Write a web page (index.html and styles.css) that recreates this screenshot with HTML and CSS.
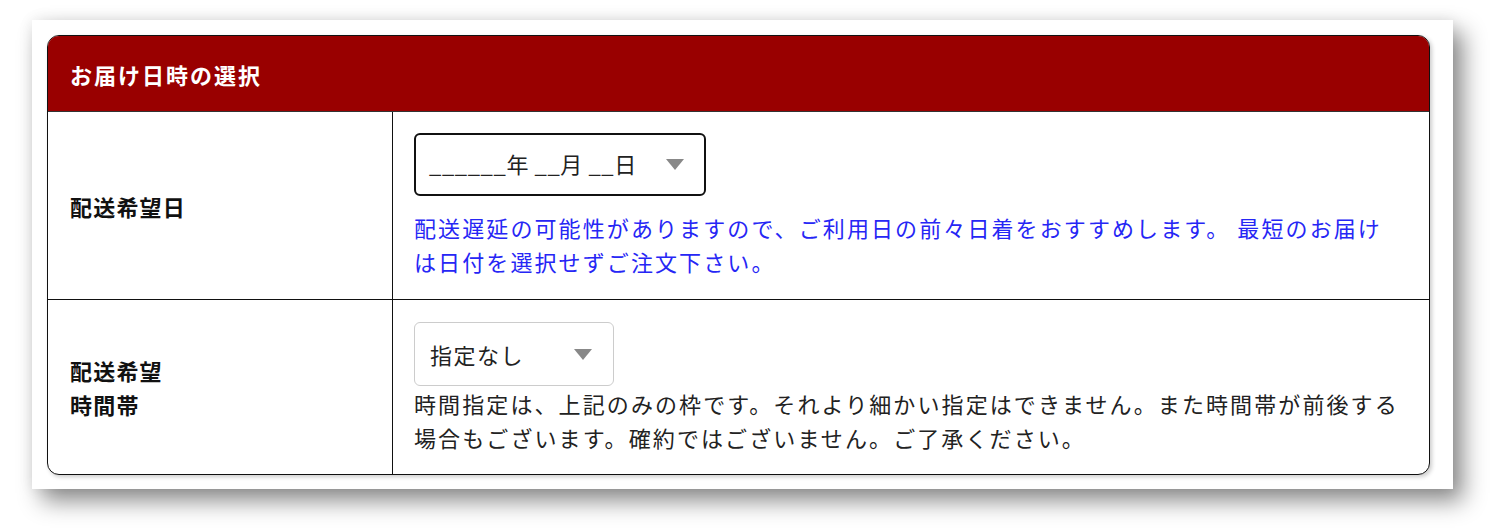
FILE: index.html
```html
<!DOCTYPE html>
<html lang="ja">
<head>
<meta charset="utf-8">
<link rel="stylesheet" href="styles.css">
</head>
<body>
<div class="frame">
  <div class="card">
    <div class="card-head">お届け日時の選択</div>
    <div class="row">
      <div class="label">配送希望日</div>
      <div class="field">
        <div class="select select-date">
          <span class="select-text">______年 __月 __日</span>
          <span class="caret"></span>
        </div>
        <p class="note note-blue">配送遅延の可能性がありますので、ご利用日の前々日着をおすすめします。 最短のお届けは日付を選択せずご注文下さい。</p>
      </div>
    </div>
    <div class="row row-last">
      <div class="label">配送希望<br>時間帯</div>
      <div class="field">
        <div class="select select-time">
          <span class="select-text">指定なし</span>
          <span class="caret"></span>
        </div>
        <p class="note">時間指定は、上記のみの枠です。それより細かい指定はできません。また時間帯が前後する場合もございます。確約ではございません。ご了承ください。</p>
      </div>
    </div>
  </div>
</div>
</body>
</html>
```

FILE: styles.css
```css
* { box-sizing: border-box; }
html, body { margin: 0; padding: 0; background: #fff; }
body {
  font-family: "Noto Sans CJK JP", "Noto Sans", sans-serif;
  color: #222;
  padding: 20px 47px 0 32px;
  min-height: 532px;
}
.frame {
  width: 1421px;
  height: 469px;
  background: #fff;
  box-shadow: 10px 12px 22px rgba(0,0,0,0.45), 0 0 14px rgba(0,0,0,0.08);
  padding: 15px 23px 14px 15px;
}
.card {
  border: 1px solid #111;
  border-radius: 12px;
  overflow: hidden;
  height: 440px;
  box-shadow: 2px 2px 4px rgba(0,0,0,0.2);
  background: #fff;
}
.card-head {
  background: #990000;
  color: #fff;
  font-weight: bold;
  font-size: 22px;
  letter-spacing: 2px;
  height: 76px;
  display: flex;
  align-items: center;
  padding-left: 22px;
  padding-top: 1px;
  border-bottom: 1px solid #333;
}
.row {
  display: grid;
  grid-template-columns: 345px 1fr;
  border-bottom: 1px solid #111;
  height: 188px;
}
.row-last { border-bottom: none; height: 174px; }
.label {
  display: flex;
  align-items: center;
  padding-left: 22px;
  font-weight: bold;
  font-size: 22px;
  letter-spacing: 1.2px;
  line-height: 34px;
  color: #111;
  border-right: 1px solid #111;
}
.field {
  padding: 21px 26px 0 21px;
}
.select {
  display: flex;
  align-items: center;
  justify-content: space-between;
  font-size: 22px;
  letter-spacing: 1.5px;
}
.select-date {
  width: 292px;
  height: 63px;
  border: 2px solid #111;
  border-radius: 6px;
  padding: 0 20px 0 13px;
  margin-bottom: 14px;
  letter-spacing: 0.6px;
}
.select-date .select-text { padding-bottom: 3px; }
.select-time {
  width: 200px;
  height: 64px;
  border: 1px solid #ccc;
  border-radius: 6px;
  padding: 0 21px 0 15px;
  margin-top: 1px;
}
.caret {
  width: 0;
  height: 0;
  border-left: 9px solid transparent;
  border-right: 9px solid transparent;
  border-top: 11px solid #888;
}
.note {
  margin: 0;
  font-size: 22px;
  line-height: 34px;
  letter-spacing: 2.1px;
  color: #222;
}
.note-blue { color: #2626f5; }
```
